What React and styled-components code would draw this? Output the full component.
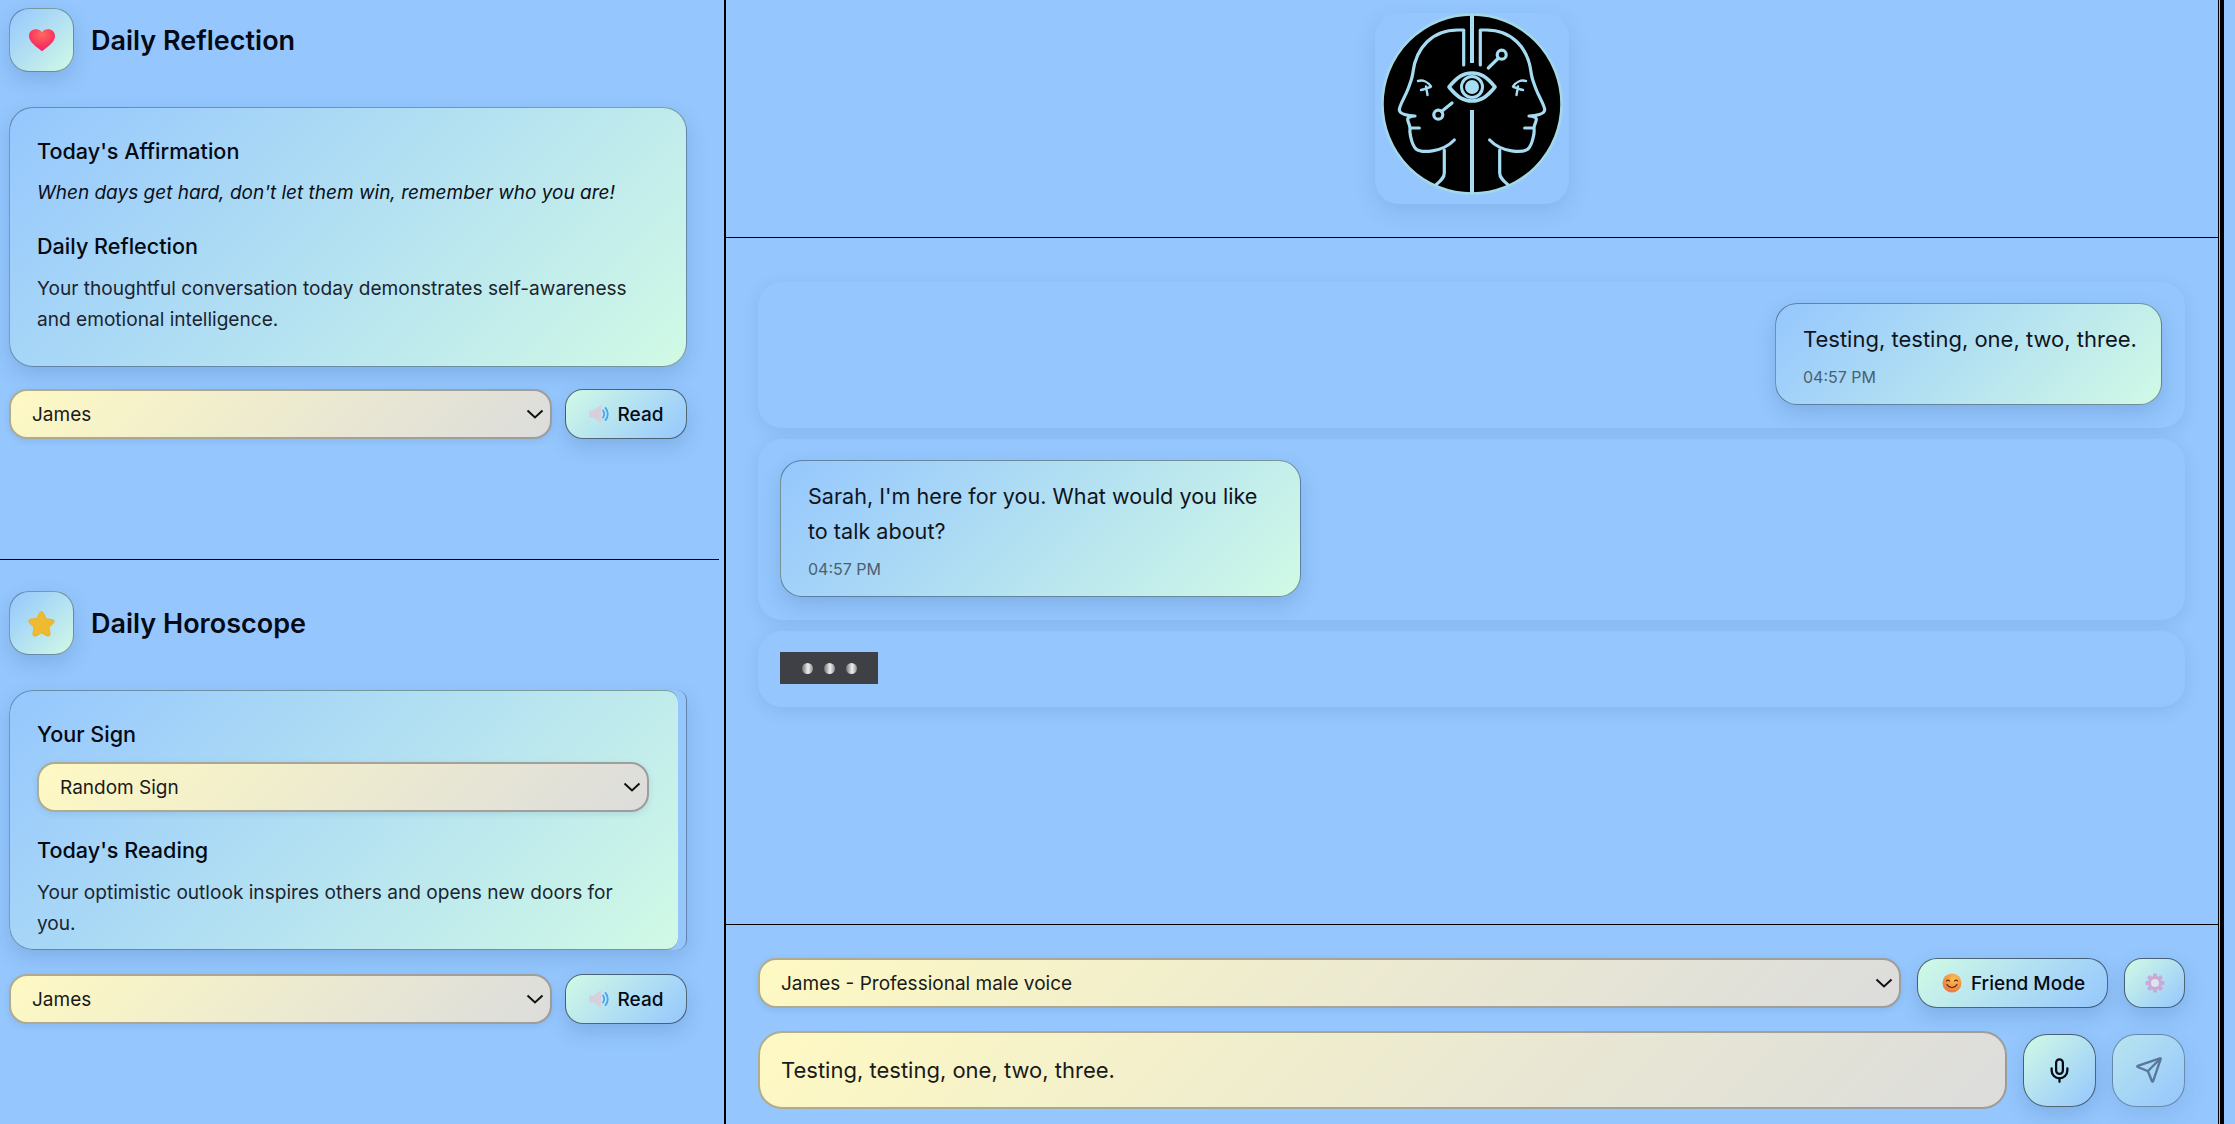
import React from "react";
import styled, { createGlobalStyle, css } from "styled-components";
import { Mic, Send } from "lucide-react";

const PAGE_BLUE = "#95c7fe";

const Global = createGlobalStyle`
  html, body { margin: 0; padding: 0; background: ${PAGE_BLUE}; }
  * { box-sizing: border-box; }
  body { font-family: Inter, "Noto Sans", sans-serif; color: #0b0f19; }
`;

const coolGradient = `linear-gradient(135deg, ${PAGE_BLUE} 0%, #d1fae5 100%)`;
const buttonGradient = `linear-gradient(135deg, #d1fae5 0%, ${PAGE_BLUE} 100%)`;
const fieldGradient = "linear-gradient(135deg, #fef9c3 0%, #dcdcdc 100%)";
const softShadow = "0 8px 20px rgba(30, 64, 120, 0.18)";
const chevron =
  "url(\"data:image/svg+xml,%3Csvg xmlns='http://www.w3.org/2000/svg' width='18' height='10' viewBox='0 0 18 10'%3E%3Cpath d='M1.500 1.500L9 8.500l7.500-7' fill='none' stroke='%23111' stroke-width='2'/%3E%3C/svg%3E\")";

const Page = styled.div`
  display: flex;
  width: 2235px;
  height: 1124px;
  overflow: hidden;
  background: ${PAGE_BLUE};
`;
const LeftColumn = styled.aside`
  width: 726px;
  flex: none;
  display: flex;
  flex-direction: column;
  border-right: 2px solid #000;
`;
const Section = styled.section`
  width: 719px;
  height: ${(p) => p.$height}px;
  padding: ${(p) => p.$top}px 32px 0 9px;
  border-bottom: ${(p) => (p.$divided ? "1px solid #000" : "0")};
`;
const SectionHeader = styled.header`
  display: flex;
  align-items: center;
  gap: 17px;
  margin-bottom: 35px;
`;
const IconTile = styled.div`
  width: 65px;
  height: 64px;
  flex: none;
  display: flex;
  align-items: center;
  justify-content: center;
  border-radius: 20px;
  border: 1px solid rgba(30, 50, 70, 0.45);
  background: ${coolGradient};
  box-shadow: ${softShadow};
`;
const SectionTitle = styled.h2`
  margin: 0;
  padding-top: 2px;
  font-size: 27px;
  line-height: 34px;
  font-weight: 600;
  color: #050a14;
`;
const Card = styled.div`
  height: 260px;
  padding: 28px 27px 0;
  border-radius: 24px;
  border: 1px solid rgba(30, 50, 70, 0.45);
  background: ${coolGradient};
  box-shadow: ${softShadow};
`;
const ScrollCard = styled.div`
  height: 260px;
  border-radius: 24px 10px 10px 24px;
  border-right: 1px solid rgba(30, 50, 70, 0.45);
  background: ${PAGE_BLUE};
  box-shadow: ${softShadow};
  overflow: hidden;
`;
const ScrollBody = styled.div`
  width: 669px;
  height: 100%;
  padding: 28px 29px 0 27px;
  border: 1px solid rgba(30, 50, 70, 0.45);
  border-right: 0;
  border-radius: 24px 12px 12px 24px;
  background: ${coolGradient};
`;
const CardHeading = styled.h3`
  margin: 0;
  font-size: 21.6px;
  line-height: 30px;
  font-weight: 450;
  color: #050a14;
`;
const Quote = styled.p`
  margin: 12px 0 23px;
  font-size: 19px;
  line-height: 30px;
  font-style: italic;
  color: #0b0f19;
`;
const Body = styled.p`
  margin: 12px 0 0;
  font-size: 19.1px;
  line-height: 31px;
  color: #1b2430;
`;
const VoiceRow = styled.div`
  display: flex;
  gap: 13px;
  margin-top: ${(p) => p.$top}px;
`;
const Select = styled.select`
  flex: 1;
  min-width: 0;
  height: 50px;
  padding: 0 34px 0 21px;
  border-radius: 18px;
  border: 2.5px solid rgba(80, 80, 80, 0.45);
  appearance: none;
  background-image: ${chevron}, ${fieldGradient};
  background-repeat: no-repeat, no-repeat;
  background-position: right 6px center, 0 0;
  background-origin: padding-box, border-box;
  background-size: 18px 10px, 100% 100%;
  font-family: Inter, sans-serif;
  font-size: 19px;
  color: #1a1a1a;
  box-shadow: 0 2px 6px rgba(30, 64, 120, 0.12);
`;
const InnerSelect = styled(Select)`
  display: block;
  width: 100%;
  margin: 13px 0 23px;
`;
const pill = css`
  display: flex;
  align-items: center;
  justify-content: center;
  border: 1.5px solid rgba(30, 45, 65, 0.7);
  background: ${buttonGradient};
  box-shadow: ${softShadow};
  font-family: Inter, sans-serif;
  color: #060b14;
  padding: 0;
`;
const ReadButton = styled.button`
  ${pill}
  width: 122px;
  height: 50px;
  flex: none;
  gap: 8px;
  border-radius: 18px;
  font-size: 19px;
  font-weight: 500;
`;
const RightColumn = styled.main`
  width: 1493px;
  flex: none;
  display: flex;
  flex-direction: column;
  border-right: 1px solid #000;
`;
const EdgeBar = styled.div`
  width: 4px;
  flex: none;
  margin-left: 1px;
  background: #000;
`;
const TopBar = styled.header`
  height: 238px;
  flex: none;
  display: flex;
  justify-content: center;
  border-bottom: 1px solid #000;
`;
const LogoCard = styled.div`
  width: 194px;
  height: 191px;
  margin-top: 13px;
  display: flex;
  align-items: flex-start;
  justify-content: center;
  align-self: flex-start;
  border-radius: 24px;
  background: ${PAGE_BLUE};
  box-shadow: 0 8px 22px rgba(30, 64, 120, 0.13);
`;
const Messages = styled.div`
  flex: 1;
  display: flex;
  flex-direction: column;
  gap: 11px;
  padding: 44px 33px 0 32px;
`;
const MessageRow = styled.div`
  display: flex;
  justify-content: ${(p) => (p.$mine ? "flex-end" : "flex-start")};
  padding: ${(p) => (p.$mine ? "21px 23px 23px" : "21px 22px 23px")};
  border-radius: 24px;
  background: ${PAGE_BLUE};
  box-shadow: 0 4px 16px rgba(30, 64, 120, 0.12);
`;
const Bubble = styled.div`
  width: ${(p) => p.$w}px;
  padding: 18px 22px 17px 27px;
  border-radius: 22px;
  border: 1px solid rgba(30, 50, 70, 0.5);
  background: ${coolGradient};
  box-shadow: ${softShadow};
`;
const BubbleText = styled.div`
  font-size: ${(p) => p.$size}px;
  line-height: 35px;
  color: #10151d;
`;
const Stamp = styled.div`
  margin-top: 10px;
  font-size: 16px;
  line-height: 20px;
  color: #4b5f70;
`;
const Typing = styled.div`
  display: flex;
  align-items: center;
  gap: 11px;
  width: 98px;
  height: 32px;
  padding-left: 22px;
  background: #3f3f46;
`;
const Dot = styled.span`
  width: 11px;
  height: 11px;
  border-radius: 50%;
  background: linear-gradient(90deg, #6f6f73 0%, #f0f0f0 55%, #8f8f92 100%);
`;
const Footer = styled.footer`
  height: 200px;
  flex: none;
  padding: 33px 33px 0 32px;
  border-top: 1px solid #000;
`;
const ControlRow = styled.div`
  display: flex;
  align-items: center;
  gap: 16px;
  margin-bottom: ${(p) => p.$mb || 0}px;
`;
const ModeButton = styled.button`
  ${pill}
  width: 191px;
  height: 50px;
  flex: none;
  gap: 9px;
  padding-left: 2px;
  border-radius: 20px;
  font-size: 19px;
  font-weight: 500;
`;
const GearButton = styled.button`
  ${pill}
  width: 61px;
  height: 50px;
  flex: none;
  border-radius: 18px;
`;
const MessageInput = styled.input`
  flex: 1;
  min-width: 0;
  height: 78px;
  padding: 0 21px;
  border-radius: 24px;
  border: 2.5px solid rgba(80, 80, 80, 0.45);
  background: ${fieldGradient};
  background-origin: border-box;
  font-family: Inter, sans-serif;
  font-size: 22px;
  color: #1a1a1a;
  outline: none;
`;
const RoundButton = styled.button`
  ${pill}
  width: 73px;
  height: 73px;
  flex: none;
  border-radius: 24px;
  opacity: ${(p) => (p.$muted ? 0.6 : 1)};
`;
const MiniIcon = styled.svg`
  flex: none;
  display: block;
`;

const Heart = () => (
  <MiniIcon width="28" height="24" viewBox="0 0 28 28" preserveAspectRatio="none">
    <defs>
      <radialGradient id="heartFill" cx="50%" cy="25%" r="85%">
        <stop offset="0%" stopColor="#ff6b5e" />
        <stop offset="60%" stopColor="#f8325f" />
        <stop offset="100%" stopColor="#f01d8a" />
      </radialGradient>
    </defs>
    <path d="M14 27C8 21.5 1 16 1 9.2 1 4.600 4.200 1.500 8 1.500c2.700 0 4.800 1.300 6 3.500 1.200-2.200 3.300-3.500 6-3.500 3.800 0 7 3.100 7 7.700 0 6.800-7 12.300-13 17.800z" fill="url(#heartFill)" />
  </MiniIcon>
);
const Star = () => (
  <MiniIcon width="29" height="29" viewBox="0 0 29 29">
    <path d="M14.500 2.500c.9 0 1.500.6 1.900 1.500l2.700 5.800 6.200.8c1.800.3 2.400 2.100 1.200 3.300l-4.500 4.500 1.100 6.300c.3 1.800-1.400 3-3 2.200l-5.600-3-5.600 3c-1.600.8-3.300-.4-3-2.200l1.100-6.300-4.500-4.500C1.300 12.200 1.900 10.400 3.700 10.100l6.200-.8L12.600 4c.4-.9 1-1.500 1.900-1.500z" fill="#eebb30" stroke="#eda820" strokeWidth="0.8" />
  </MiniIcon>
);
const Speaker = () => (
  <MiniIcon width="21" height="20" viewBox="0 0 21 20">
    <path d="M0 6.500h4.500L12 1v18l-7.500-5.500H0z" fill="#d8cfdc" />
    <path d="M14 6.500c1.600 1.800 1.600 5.200 0 7M16.500 4c3 3 3 9 0 12" fill="none" stroke="#4aa5ee" strokeWidth="1.800" strokeLinecap="round" />
  </MiniIcon>
);
const Smile = () => (
  <MiniIcon width="20" height="20" viewBox="0 0 20 20">
    <defs>
      <radialGradient id="smileFill" cx="60%" cy="30%" r="80%">
        <stop offset="0%" stopColor="#fcc24d" />
        <stop offset="100%" stopColor="#ef6d3f" />
      </radialGradient>
    </defs>
    <circle cx="10" cy="10" r="9.500" fill="url(#smileFill)" />
    <path d="M4.500 8c.8-1.200 2.200-1.200 3 0M12.500 8c.8-1.200 2.200-1.200 3 0M5 11.500c2.500 4 7.500 4 10 0" fill="none" stroke="#5a2c20" strokeWidth="1.200" strokeLinecap="round" />
  </MiniIcon>
);
const Gear = () => (
  <MiniIcon width="20" height="20" viewBox="0 0 20 20">
    <g fill="#c9a9d6">
      {[0, 45, 90, 135, 180, 225, 270, 315].map((a) => (
        <rect key={a} x="8" y="0.500" width="4" height="5" rx="1" transform={`rotate(${a} 10 10)`} />
      ))}
    </g>
    <circle cx="10" cy="10" r="5.500" fill="#dfe3ee" stroke="#c9a9d6" strokeWidth="3" />
  </MiniIcon>
);
const Logo = () => (
  <svg width="182" height="182" viewBox="-1 -1 182 182">
    <circle cx="90" cy="90" r="89.500" fill="#000" stroke="#a4d8e6" strokeWidth="2.500" />
    <g fill="none" stroke="#a6dcf2" strokeWidth="3.200" strokeLinecap="round" strokeLinejoin="round">
      <path d="M90 1V49M90 96V179" strokeWidth="4" strokeLinecap="butt" />
      <g id="face">
        <path d="M81.700 51V16H76C50 16 34 34 31 58c-.6 6-2 9-5 17-3 8-9 17-8.700 21 .3 4 9 6 15.700 6-3 0-7 1-7.300 3-.2 3 2 5 2.300 9h9.300-9.300c-.3 3-.3 5 .5 8 1 4 1.500 9 5.500 13 5 4 26 4 38.300-9" />
        <path d="M62.300 136V159c0 5-4 8-8 11.500" />
        <path d="M36 67c5-1.500 10 1 13 5.500M39 76c3-.5 7-2.500 9.500-3M44 72.500L45.500 81" strokeWidth="2.400" />
      </g>
      <use href="#face" transform="translate(180 0) scale(-1 1)" />
      <path d="M67 73C76 62 82 59 90 59s14 3 23 14C104 84 98 87 90 87s-14-3-23-14z" strokeWidth="3.600" />
      <circle cx="90" cy="73" r="10.500" strokeWidth="3" />
      <circle cx="90" cy="73" r="7" fill="#a6dcf2" stroke="none" />
      <circle cx="119.700" cy="40.700" r="4.500" />
      <path d="M116.500 44L106.300 54" />
      <circle cx="56.300" cy="100.700" r="4.500" />
      <path d="M59.500 97.500L70 89" />
    </g>
  </svg>
);

export default function App() {
  return (
    <Page>
      <Global />
      <LeftColumn>
        <Section $height={560} $top={8} $divided>
          <SectionHeader>
            <IconTile><Heart /></IconTile>
            <SectionTitle>Daily Reflection</SectionTitle>
          </SectionHeader>
          <Card>
            <CardHeading>Today's Affirmation</CardHeading>
            <Quote>When days get hard, don't let them win, remember who you are!</Quote>
            <CardHeading>Daily Reflection</CardHeading>
            <Body>Your thoughtful conversation today demonstrates self-awareness and emotional intelligence.</Body>
          </Card>
          <VoiceRow $top={22}>
            <Select defaultValue="James"><option>James</option></Select>
            <ReadButton><Speaker />Read</ReadButton>
          </VoiceRow>
        </Section>
        <Section $height={564} $top={31}>
          <SectionHeader>
            <IconTile><Star /></IconTile>
            <SectionTitle>Daily Horoscope</SectionTitle>
          </SectionHeader>
          <ScrollCard>
            <ScrollBody>
              <CardHeading>Your Sign</CardHeading>
              <InnerSelect defaultValue="Random Sign"><option>Random Sign</option></InnerSelect>
              <CardHeading>Today's Reading</CardHeading>
              <Body>Your optimistic outlook inspires others and opens new doors for you.</Body>
            </ScrollBody>
          </ScrollCard>
          <VoiceRow $top={24}>
            <Select defaultValue="James"><option>James</option></Select>
            <ReadButton><Speaker />Read</ReadButton>
          </VoiceRow>
        </Section>
      </LeftColumn>
      <RightColumn>
        <TopBar>
          <LogoCard><Logo /></LogoCard>
        </TopBar>
        <Messages>
          <MessageRow $mine>
            <Bubble $w={387}>
              <BubbleText $size={22}>Testing, testing, one, two, three.</BubbleText>
              <Stamp>04:57 PM</Stamp>
            </Bubble>
          </MessageRow>
          <MessageRow>
            <Bubble $w={521}>
              <BubbleText $size={21.6}>Sarah, I'm here for you. What would you like to talk about?</BubbleText>
              <Stamp>04:57 PM</Stamp>
            </Bubble>
          </MessageRow>
          <MessageRow>
            <Typing><Dot /><Dot /><Dot /></Typing>
          </MessageRow>
        </Messages>
        <Footer>
          <ControlRow $mb={23}>
            <Select defaultValue="James - Professional male voice"><option>James - Professional male voice</option></Select>
            <ModeButton><Smile />Friend Mode</ModeButton>
            <GearButton><Gear /></GearButton>
          </ControlRow>
          <ControlRow>
            <MessageInput defaultValue="Testing, testing, one, two, three." />
            <RoundButton><Mic size={27} strokeWidth={2} /></RoundButton>
            <RoundButton $muted><Send size={28} strokeWidth={2} color="#334155" /></RoundButton>
          </ControlRow>
        </Footer>
      </RightColumn>
      <EdgeBar />
    </Page>
  );
}
